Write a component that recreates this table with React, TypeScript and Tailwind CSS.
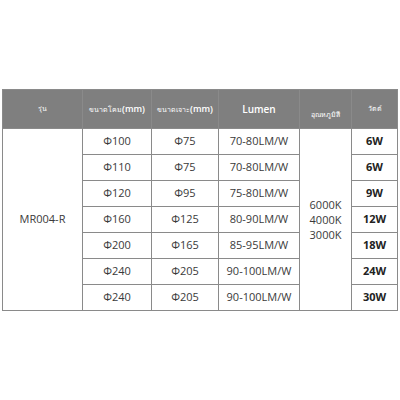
const rows = [
  { lamp: "Φ100", cut: "Φ75", lumen: "70-80LM/W", watt: "6W" },
  { lamp: "Φ110", cut: "Φ75", lumen: "70-80LM/W", watt: "6W" },
  { lamp: "Φ120", cut: "Φ95", lumen: "75-80LM/W", watt: "9W" },
  { lamp: "Φ160", cut: "Φ125", lumen: "80-90LM/W", watt: "12W" },
  { lamp: "Φ200", cut: "Φ165", lumen: "85-95LM/W", watt: "18W" },
  { lamp: "Φ240", cut: "Φ205", lumen: "90-100LM/W", watt: "24W" },
  { lamp: "Φ240", cut: "Φ205", lumen: "90-100LM/W", watt: "30W" },
];

const cell = "border border-[#8a8a8a] text-center align-middle p-0";

export default function App() {
  return (
    <div className="h-[400px] w-[400px] bg-white pt-[89px] pl-[2px] font-['Open_Sans',sans-serif] text-[#3a3a3a]">
      <table className="w-[395px] table-fixed border-collapse">
        <colgroup>
          <col className="w-[80px]" />
          <col className="w-[69px]" />
          <col className="w-[67px]" />
          <col className="w-[81px]" />
          <col className="w-[52px]" />
          <col className="w-[46px]" />
        </colgroup>
        <thead>
          <tr className="h-[39px] bg-[#7f7f7f] text-white">
            <th className={`${cell} text-[7px] font-normal`}>รุ่น</th>
            <th className={`${cell} text-[7px] font-normal whitespace-nowrap`}>
              ขนาดโคม<span className="text-[9px] font-semibold">(mm)</span>
            </th>
            <th className={`${cell} text-[7px] font-normal whitespace-nowrap`}>
              ขนาดเจาะ<span className="text-[9px] font-semibold">(mm)</span>
            </th>
            <th className={`${cell} text-[10px] font-semibold`}>Lumen</th>
            <th className={`${cell} text-[7px] font-normal`}>
              <span className="relative top-[6px]">อุณหภูมิสี</span>
            </th>
            <th className={`${cell} text-[7px] font-normal`}>วัตต์</th>
          </tr>
        </thead>
        <tbody className="text-[11px]">
          {rows.map((r, i) => (
            <tr key={i} className="h-[26px]">
              {i === 0 && (
                <td rowSpan={7} className={cell}>
                  MR004-R
                </td>
              )}
              <td className={cell}>{r.lamp}</td>
              <td className={cell}>{r.cut}</td>
              <td className={cell}>{r.lumen}</td>
              {i === 0 && (
                <td rowSpan={7} className={`${cell} leading-[15px]`}>
                  6000K
                  <br />
                  4000K
                  <br />
                  3000K
                </td>
              )}
              <td className={`${cell} font-bold text-[#222]`}>{r.watt}</td>
            </tr>
          ))}
        </tbody>
      </table>
    </div>
  );
}
